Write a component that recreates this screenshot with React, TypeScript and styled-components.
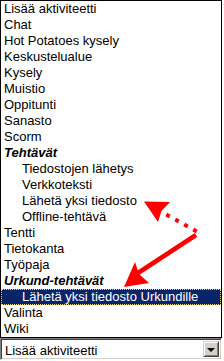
import React from "react";
import styled, {createGlobalStyle} from "styled-components";

const GlobalStyle = createGlobalStyle`
  body {
    margin: 0;
    background: #fff;
    font-family: "Liberation Sans", Arial, sans-serif;
  }
`;

const Page = styled.div`
  position: relative;
  width: 224px;
  height: 361px;
  overflow: hidden;
`;

const ListBox = styled.ul`
  list-style: none;
  margin: 0;
  padding: 0;
  width: 222px;
  box-sizing: border-box;
  border: 1px solid #000;
  background: #fff;
`;

type Kind = "item" | "group" | "child" | "selected";

const Row = styled.li<{ $kind: Kind }>`
  height: 16px;
  line-height: 16px;
  font-size: 13px;
  white-space: nowrap;
  color: ${p => (p.$kind === "selected" ? "#fff" : "#000")};
  background: ${p => (p.$kind === "selected" ? "#0a246a" : "transparent")};
  font-weight: ${p => (p.$kind === "group" ? "bold" : "normal")};
  font-style: ${p => (p.$kind === "group" ? "italic" : "normal")};
  padding-left: ${p => (p.$kind === "child" || p.$kind === "selected" ? 21 : 3)}px;
  outline: ${p => (p.$kind === "selected" ? "1px dotted #e8d88a" : "none")};
  outline-offset: -1px;
`;

const Select = styled.div`
  display: flex;
  align-items: flex-start;
  width: 222px;
  height: 22px;
  box-sizing: border-box;
  border-top: 1px solid #808080;
  border-left: 1px solid #808080;
  border-bottom: 1px solid #fff;
  border-right: 1px solid #fff;
  box-shadow: inset 1px 1px 0 #404040, inset -1px -1px 0 #d4d0c8;
  background: #fff;
`;

const SelectText = styled.span`
  flex: 1;
  font-size: 13px;
  line-height: 14px;
  padding: 5px 0 0 4px;
  color: #000;
`;

const DropButton = styled.div`
  width: 16px;
  height: 16px;
  margin: 2px 2px 0 0;
  box-sizing: border-box;
  background: #d4d0c8;
  border-top: 1px solid #d4d0c8;
  border-left: 1px solid #d4d0c8;
  border-right: 1px solid #404040;
  border-bottom: 1px solid #404040;
  box-shadow: inset 1px 1px 0 #fff, inset -1px -1px 0 #808080;
  display: flex;
  align-items: center;
  justify-content: center;
`;

const Triangle = styled.span`
  width: 0;
  height: 0;
  border-left: 4px solid transparent;
  border-right: 4px solid transparent;
  border-top: 4px solid #000;
  margin-top: 1px;
`;

const Overlay = styled.svg`
  position: absolute;
  top: 0;
  left: 0;
  pointer-events: none;
`;

const items: [string, Kind][] = [
    ["Lisää aktiviteetti", "item"],
    ["Chat", "item"],
    ["Hot Potatoes kysely", "item"],
    ["Keskustelualue", "item"],
    ["Kysely", "item"],
    ["Muistio", "item"],
    ["Oppitunti", "item"],
    ["Sanasto", "item"],
    ["Scorm", "item"],
    ["Tehtävät", "group"],
    ["Tiedostojen lähetys", "child"],
    ["Verkkoteksti", "child"],
    ["Lähetä yksi tiedosto", "child"],
    ["Offline-tehtävä", "child"],
    ["Tentti", "item"],
    ["Tietokanta", "item"],
    ["Työpaja", "item"],
    ["Urkund-tehtävät", "group"],
    ["Lähetä yksi tiedosto Urkundille", "selected"],
    ["Valinta", "item"],
    ["Wiki", "item"],
];

const dots = [[168, 215.5], [177, 220.5], [186, 225.5], [195, 230.5]];

export default function App() {
    return (
        <Page>
            <GlobalStyle/>
            <ListBox>
                {items.map(([label, kind]) => (
                    <Row key={label} $kind={kind}>{label}</Row>
                ))}
            </ListBox>
            <Select>
                <SelectText>Lisää aktiviteetti</SelectText>
                <DropButton><Triangle/></DropButton>
            </Select>
            <Overlay width="224" height="361" viewBox="0 0 224 361">
                {/* dotted arrow */}
                <polygon points="144,201.5 170,202 161.5,211 158,222" fill="#f00"/>
                {dots.map(([x, y]) => (
                    <rect key={x} x={x - 2} y={y - 2} width="4" height="4" fill="#f00"
                          transform={`rotate(28 ${x} ${y})`}/>
                ))}
                {/* solid arrow */}
                <line x1="196" y1="235" x2="138" y2="273" stroke="#f00" strokeWidth="4.5"/>
                <polygon points="124,287 135,262 139,274 149,283" fill="#f00"/>
            </Overlay>
        </Page>
    );
}
